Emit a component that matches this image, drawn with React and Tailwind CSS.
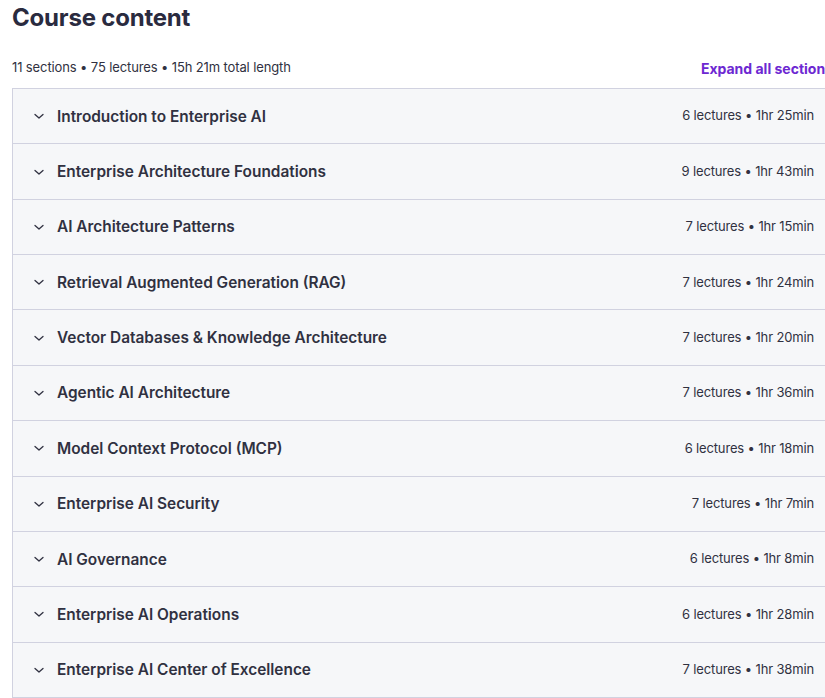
import React from "react";

const sections = [
  ["Introduction to Enterprise AI", "6 lectures", "1hr 25min"],
  ["Enterprise Architecture Foundations", "9 lectures", "1hr 43min"],
  ["AI Architecture Patterns", "7 lectures", "1hr 15min"],
  ["Retrieval Augmented Generation (RAG)", "7 lectures", "1hr 24min"],
  ["Vector Databases & Knowledge Architecture", "7 lectures", "1hr 20min"],
  ["Agentic AI Architecture", "7 lectures", "1hr 36min"],
  ["Model Context Protocol (MCP)", "6 lectures", "1hr 18min"],
  ["Enterprise AI Security", "7 lectures", "1hr 7min"],
  ["AI Governance", "6 lectures", "1hr 8min"],
  ["Enterprise AI Operations", "6 lectures", "1hr 28min"],
  ["Enterprise AI Center of Excellence", "7 lectures", "1hr 38min"],
];

function Chevron() {
  return (
    <svg width="12" height="12" viewBox="0 0 12 12" fill="none" className="shrink-0">
      <path d="M2 4.5 L6 8 L10 4.5" stroke="#303141" strokeWidth="1.3" strokeLinecap="round" strokeLinejoin="round" />
    </svg>
  );
}

export default function App() {
  return (
    <div className="w-[825px] h-[698px] overflow-hidden bg-white" style={{ fontFamily: "Inter, 'Noto Sans', sans-serif" }}>
      <div className="w-[833px] pl-[12px]">
        <h2 className="text-[24px] leading-[36px] font-bold text-[#2a2b3f] tracking-[-0.2px]">Course content</h2>
        <div className="flex items-center justify-between mt-[18px] h-[28px] mb-[6px]">
          <span className="text-[13px] tracking-[-0.12px] text-[#303141]">11 sections • 75 lectures • 15h 21m total length</span>
          <span className="text-[14px] font-bold text-[#6d28d2]">Expand all sections</span>
        </div>
        <div className="border border-[#d1d2e0] border-b-0">
          {sections.map(([title, lec, time]) => (
            <div key={title} className="h-[55.36px] flex items-center bg-[#f6f7f9] border-b border-[#d1d2e0] pl-[20px] pr-[18px]">
              <Chevron />
              <span className="ml-[12px] text-[15.4px] font-semibold text-[#303141]">{title}</span>
              <span className="ml-auto text-[13px] tracking-[-0.15px] text-[#303141]">{lec} • {time}</span>
            </div>
          ))}
        </div>
      </div>
    </div>
  );
}
